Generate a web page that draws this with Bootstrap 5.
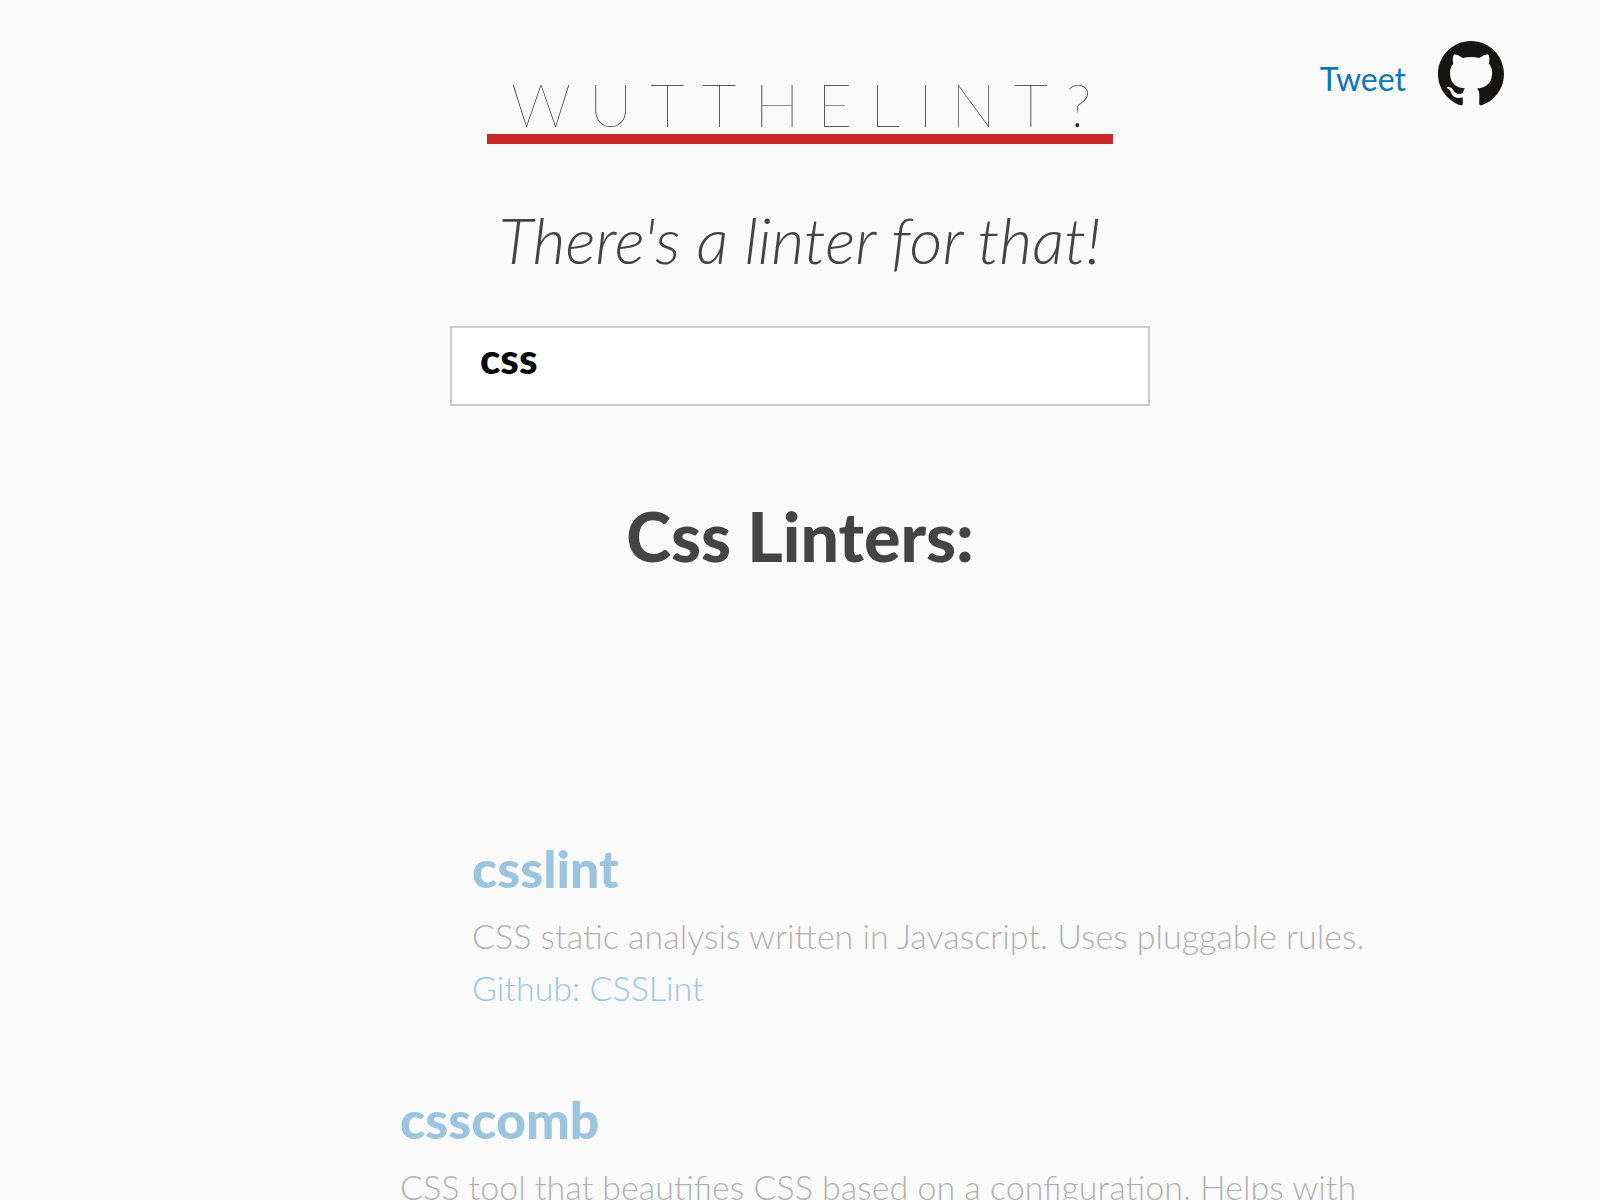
<!DOCTYPE html>
<html lang="en">
<head>
<meta charset="utf-8">
<meta name="viewport" content="width=device-width, initial-scale=1">
<title>WUTTHELINT?</title>
<link href="https://cdn.jsdelivr.net/npm/bootstrap@5.3.0/dist/css/bootstrap.min.css" rel="stylesheet">
<style>
  body { background: #fafafa; color: #444; font-family: Lato, sans-serif; font-size: 34px; font-weight: 300; line-height: 52px; }
  a { color: #0e75b8; text-decoration: none; }
  .corner-links { top: 41px; right: 96px; gap: 32px; }
  .corner-links svg { display: block; width: 66px; height: 66px; fill: #161514; }
  .tweet-link { font-size: 32px; font-weight: 400; padding-top: 10px; }
  .site-head { padding-top: 74px; }
  .logo-word { font-size: 60px; font-weight: 100; line-height: 60px; letter-spacing: 18px; color: #222; border-bottom: 10px solid #c62828; padding: 0 4px 0 24px; }
  .tagline { font-size: 64px; font-style: italic; font-weight: 300; line-height: 80px; margin-top: 56px; }
  .search-box { max-width: 700px; height: 80px; margin-top: 46px; border: 2px solid #ccc; border-radius: 0; background: #fff; color: #000; font-size: 42px; font-weight: 900; padding: 0 28px 16px; }
  .search-box:focus { color: #000; box-shadow: none; border-color: #ccc; }
  .result-title { font-size: 68px; font-weight: 900; line-height: 80px; margin-top: 90px; }
  .linters { padding-left: 25%; margin-top: 260px; }
  .linter { max-width: 1000px; opacity: .4; margin-bottom: 73px; }
  .entering { margin-left: 72px; }
  .linter h3 { font-size: 52px; font-weight: 900; line-height: 64px; margin-bottom: 10px; }
</style>
<script src="https://cdn.jsdelivr.net/npm/bootstrap@5.3.0/dist/js/bootstrap.bundle.min.js"></script>
</head>
<body>
<nav class="corner-links position-absolute d-flex align-items-center" aria-label="Share">
  <a class="tweet-link" href="#tweet">Tweet</a>
  <a href="#github" aria-label="GitHub">
    <svg viewBox="0 0 16 16" aria-hidden="true"><path d="M8 0C3.58 0 0 3.58 0 8c0 3.54 2.29 6.53 5.47 7.59.4.07.55-.17.55-.38 0-.19-.01-.82-.01-1.49-2.01.37-2.53-.49-2.69-.94-.09-.23-.48-.94-.82-1.13-.28-.15-.68-.52-.01-.53.63-.01 1.08.58 1.23.82.72 1.21 1.87.87 2.33.66.07-.52.28-.87.51-1.07-1.78-.2-3.64-.89-3.64-3.95 0-.87.31-1.59.82-2.15-.08-.2-.36-1.02.08-2.12 0 0 .67-.21 2.2.82.64-.18 1.32-.27 2-.27s1.36.09 2 .27c1.53-1.04 2.2-.82 2.2-.82.44 1.1.16 1.92.08 2.12.51.56.82 1.27.82 2.15 0 3.07-1.87 3.75-3.65 3.95.29.25.54.73.54 1.48 0 1.07-.01 1.93-.01 2.2 0 .21.15.46.55.38A8.01 8.01 0 0 0 16 8c0-4.42-3.58-8-8-8z"/></svg>
  </a>
</nav>
<header class="site-head d-flex flex-column align-items-center text-center">
  <h1 class="logo-word mb-0">WUTTHELINT?</h1>
  <h2 class="tagline mb-0">There's a linter for that!</h2>
  <input class="search-box form-control" type="text" value="css" aria-label="Language">
</header>
<main>
  <h2 class="result-title text-center mb-0">Css Linters:</h2>
  <div class="linters">
    <article class="linter entering">
      <h3><a href="#csslint">csslint</a></h3>
      <p class="mb-0">CSS static analysis written in Javascript. Uses pluggable rules.</p>
      <a href="#csslint-repo">Github: CSSLint</a>
    </article>
    <article class="linter mb-0">
      <h3><a href="#csscomb">csscomb</a></h3>
      <p class="mb-0">CSS tool that beautifies CSS based on a configuration. Helps with</p>
    </article>
  </div>
</main>
</body>
</html>
